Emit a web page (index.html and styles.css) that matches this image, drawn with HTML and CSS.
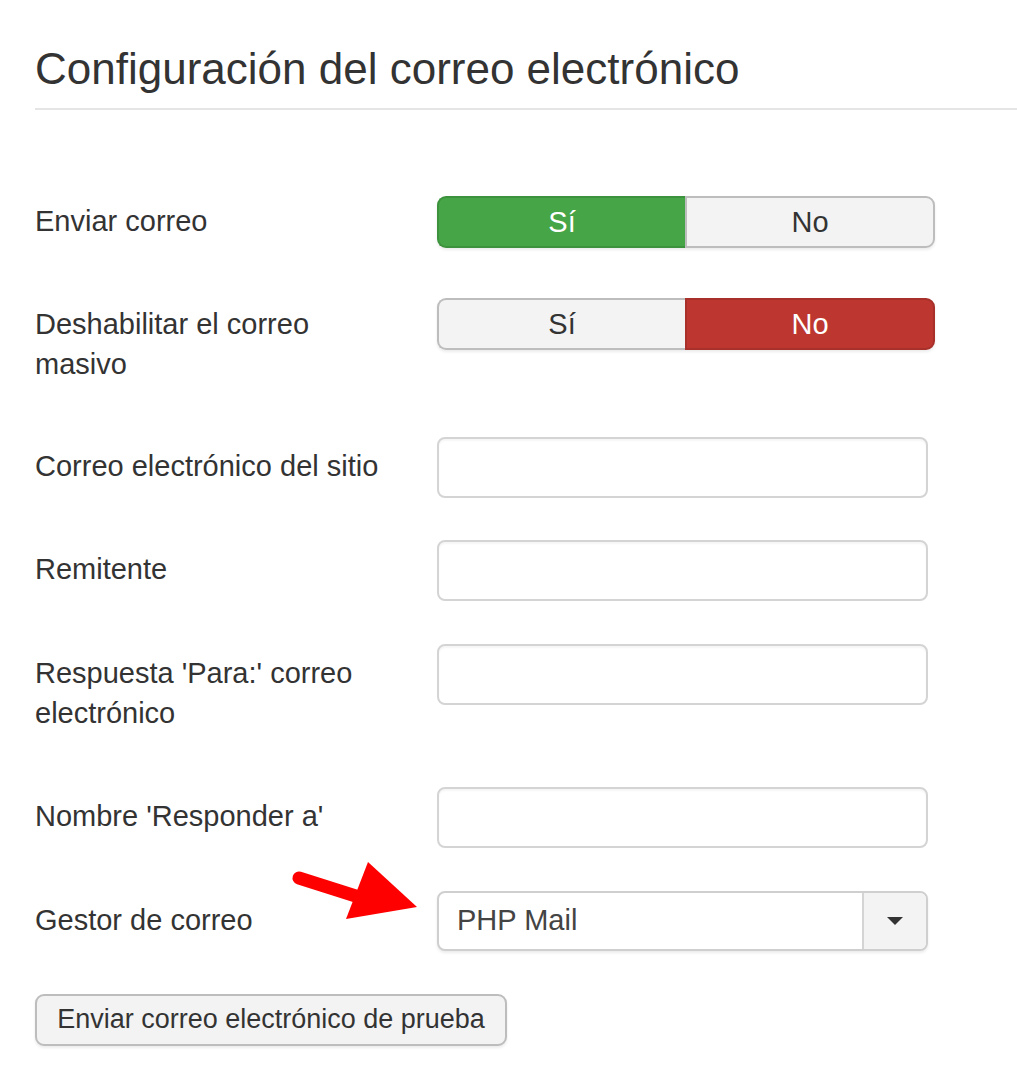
FILE: index.html
```html
<!DOCTYPE html>
<html lang="es">
<head>
<meta charset="utf-8">
<title>Configuración del correo electrónico</title>
<link rel="stylesheet" href="styles.css">
</head>
<body>
<div class="page">
  <h2 class="legend">Configuración del correo electrónico</h2>
  <form class="form">
    <div class="row row-toggle">
      <div class="label label-toggle">Enviar correo</div>
      <div class="toggle">
        <span class="tbtn on-yes">Sí</span>
        <span class="tbtn">No</span>
      </div>
    </div>
    <div class="row row-toggle">
      <div class="label label-toggle label-tight">Deshabilitar el correo<br>masivo</div>
      <div class="toggle">
        <span class="tbtn">Sí</span>
        <span class="tbtn on-no">No</span>
      </div>
    </div>
    <div class="row">
      <div class="label">Correo electrónico del sitio</div>
      <div class="input"></div>
    </div>
    <div class="row">
      <div class="label">Remitente</div>
      <div class="input"></div>
    </div>
    <div class="row">
      <div class="label">Respuesta 'Para:' correo<br>electrónico</div>
      <div class="input"></div>
    </div>
    <div class="row">
      <div class="label">Nombre 'Responder a'</div>
      <div class="input"></div>
    </div>
    <div class="row">
      <div class="label">Gestor de correo</div>
      <div class="select">
        <span class="select-text">PHP Mail</span>
        <span class="select-caret"><span class="caret"></span></span>
      </div>
    </div>
    <div class="btn">Enviar correo electrónico de prueba</div>
  </form>
  <svg class="arrow" width="140" height="80" viewBox="285 850 140 80" xmlns="http://www.w3.org/2000/svg">
    <line x1="299" y1="878" x2="362" y2="898" stroke="#ff0000" stroke-width="13" stroke-linecap="round"/>
    <polygon points="368,862 346,919 417,907" fill="#ff0000"/>
  </svg>
</div>
</body>
</html>
```

FILE: styles.css
```css
html, body {
  margin: 0;
  padding: 0;
  background: #ffffff;
}
body {
  font-family: "Liberation Sans", Arial, sans-serif;
  color: #333333;
}
.page {
  position: relative;
  padding-left: 35px;
  width: 982px;
  height: 1080px;
  overflow: hidden;
}
.legend {
  margin: 29px 0 0 0;
  font-size: 44px;
  font-weight: normal;
  line-height: 79px;
  color: #333333;
  border-bottom: 2px solid #e5e5e5;
}
.form {
  padding-top: 86px;
}
.row {
  display: grid;
  grid-template-columns: 402px 1fr;
  align-items: start;
  margin-bottom: 42.4px;
}
.row-toggle {
  margin-bottom: 42px;
}
.label {
  font-size: 29px;
  line-height: 40px;
  padding-top: 9px;
  padding-bottom: 12px;
  color: #333333;
}
.label-toggle {
  padding-top: 5px;
  padding-bottom: 15px;
}
.label-tight {
  padding-top: 6px;
  padding-bottom: 11px;
}
.toggle {
  display: flex;
  width: 498px;
  height: 52px;
  box-sizing: border-box;
  border-radius: 9px;
  box-shadow: 0 2px 3px rgba(0, 0, 0, 0.08);
}
.tbtn {
  flex: 1;
  display: flex;
  align-items: center;
  justify-content: center;
  font-size: 29px;
  color: #333333;
  background: #f3f3f3;
  border: 2px solid #bdbdbd;
  box-sizing: border-box;
}
.tbtn:first-child {
  border-radius: 9px 0 0 9px;
  border-right: none;
}
.tbtn:last-child {
  border-radius: 0 9px 9px 0;
}
.on-yes {
  background: #46a546;
  border-color: #3d923d;
  color: #ffffff;
}
.on-no {
  background: #bd362f;
  border-color: #a8302a;
  color: #ffffff;
}
.input {
  width: 491px;
  height: 61px;
  box-sizing: border-box;
  border: 2px solid #d4d4d4;
  border-radius: 8px;
  background: #ffffff;
  box-shadow: inset 0 2px 2px rgba(0, 0, 0, 0.04);
}
.select {
  display: flex;
  width: 491px;
  height: 60px;
  box-sizing: border-box;
  border: 2px solid #cfcfcf;
  border-radius: 8px;
  background: #ffffff;
  box-shadow: 0 2px 3px rgba(0, 0, 0, 0.08);
  overflow: hidden;
}
.select-text {
  flex: 1;
  display: flex;
  align-items: center;
  padding-left: 18px;
  font-size: 29px;
  color: #444444;
}
.select-caret {
  width: 62px;
  display: flex;
  align-items: center;
  justify-content: center;
  background: #f3f3f3;
  border-left: 2px solid #d4d4d4;
}
.caret {
  width: 0;
  height: 0;
  border-left: 8px solid transparent;
  border-right: 8px solid transparent;
  border-top: 8px solid #333333;
}
.btn {
  display: inline-flex;
  align-items: center;
  justify-content: center;
  width: 472px;
  height: 52px;
  box-sizing: border-box;
  font-size: 27px;
  color: #333333;
  background: #f3f3f3;
  border: 2px solid #bdbdbd;
  border-radius: 9px;
  box-shadow: 0 2px 3px rgba(0, 0, 0, 0.08);
}
.arrow {
  position: absolute;
  left: 285px;
  top: 850px;
}
```
